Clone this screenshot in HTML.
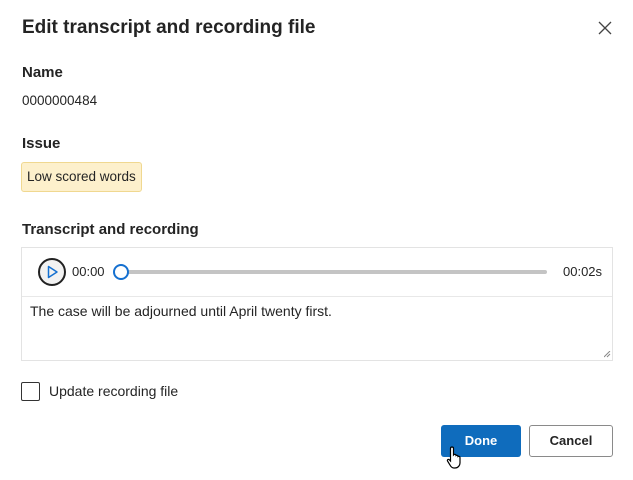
<!DOCTYPE html>
<html><head><style>
*{box-sizing:border-box;margin:0;padding:0}
body{width:633px;height:480px;background:#fff;font-family:"Liberation Sans",sans-serif;color:#242424;position:relative;overflow:hidden}
.a{position:absolute}
.lbl{font-size:15px;font-weight:bold;color:#242424}
</style></head><body>
<div class="a" style="left:22px;top:17px;font-size:19px;font-weight:bold;color:#242424">Edit transcript and recording file</div>
<svg class="a" style="left:598px;top:21px" width="14" height="14"><path d="M1 1L13 13M13 1L1 13" stroke="#444" stroke-width="1.3"/></svg>
<div class="a lbl" style="left:22px;top:64px">Name</div>
<div class="a" style="left:22px;top:93px;font-size:13.5px">0000000484</div>
<div class="a lbl" style="left:22px;top:135px">Issue</div>
<div class="a" style="left:21px;top:162px;width:121px;height:30px;background:#fdf0cc;border:1px solid #f0d890;border-radius:3px;font-size:13.5px;line-height:28px;padding-left:5px;white-space:nowrap">Low scored words</div>
<div class="a lbl" style="left:22px;top:221px">Transcript and recording</div>
<div class="a" style="left:21px;top:247px;width:592px;height:114px;border:1px solid #e3e3e3"></div>
<div class="a" style="left:22px;top:296px;width:590px;height:1px;background:#e8e8e8"></div>
<div class="a" style="left:38px;top:258px;width:28px;height:28px;border:2px solid #222;border-radius:50%;background:#f2f2f2"></div>
<svg class="a" style="left:47px;top:265px" width="12" height="14"><path d="M1.5 1.5L10 7L1.5 12.5Z" fill="none" stroke="#1570d0" stroke-width="1.5" stroke-linejoin="round"/></svg>
<div class="a" style="left:72px;top:264px;font-size:13px">00:00</div>
<div class="a" style="left:125px;top:270px;width:422px;height:4px;background:#c4c4c4;border-radius:2px"></div>
<div class="a" style="left:113px;top:264px;width:16px;height:16px;border:2.5px solid #1570d0;border-radius:50%;background:#fff"></div>
<div class="a" style="left:563px;top:264px;font-size:13px">00:02s</div>
<div class="a" style="left:30px;top:303px;font-size:14px">The case will be adjourned until April twenty first.</div>
<svg class="a" style="left:604px;top:351px" width="7" height="7"><path d="M6 0L0 6M6 3L3 6" stroke="#888" stroke-width="1"/></svg>
<div class="a" style="left:21px;top:382px;width:19px;height:19px;border:1px solid #333;border-radius:2px"></div>
<div class="a" style="left:49px;top:383px;font-size:14px">Update recording file</div>
<div class="a" style="left:441px;top:425px;width:80px;height:32px;background:#0f6cbd;border-radius:3px;color:#fff;font-weight:bold;font-size:13px;text-align:center;line-height:32px">Done</div>
<div class="a" style="left:529px;top:425px;width:84px;height:32px;border:1px solid #8a8a8a;border-radius:3px;font-weight:bold;font-size:13px;text-align:center;line-height:30px">Cancel</div>
<svg class="a" style="left:445px;top:445px" width="24" height="26"><path d="M7 2c1 0 1.5.6 1.5 1.5V10l.5-.5c1-.4 2 0 2 1 .8-.5 2 0 2 1 .8-.5 2 0 2 1V18c0 2.5-2 5-5 5H9c-2 0-3-1-4-3l-2.5-4c-.5-1 .5-2 1.5-1.5L5.5 16V3.5C5.5 2.6 6 2 7 2z" fill="#fff" stroke="#000" stroke-width="1.2"/></svg>
</body></html>
